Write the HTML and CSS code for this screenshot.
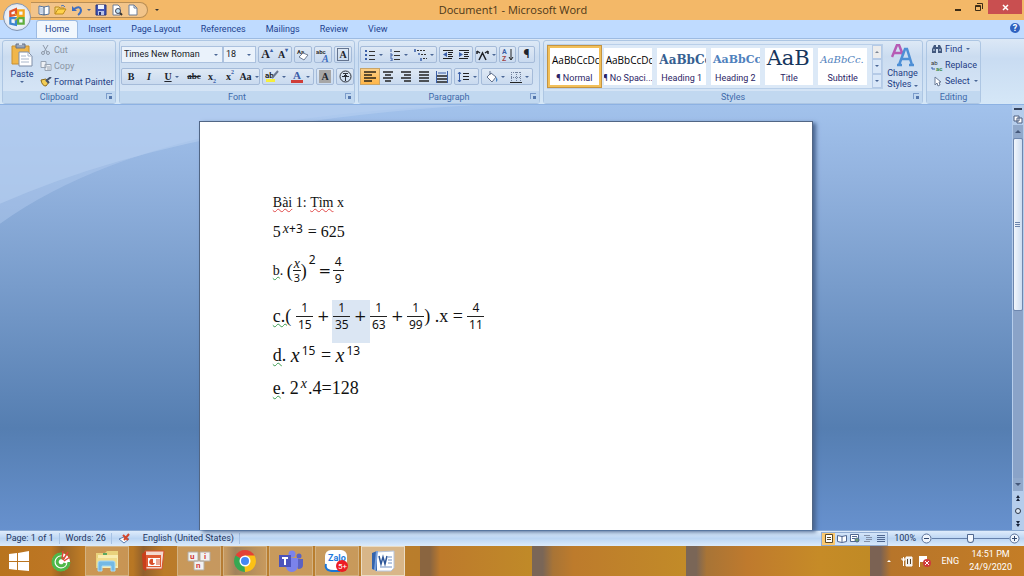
FILE: index.html
```html
<!DOCTYPE html>
<html lang="en">
<head>
  <meta charset="UTF-8" />
  <meta name="viewport" content="width=device-width, initial-scale=1" />
  <title>Document1 - Microsoft Word</title>
  <link rel="stylesheet" href="styles.css">
</head>
<body>

  <header class="titlebar">
    <button class="office" aria-label="Office Button">
      <svg width="20" height="20" viewBox="0 0 18 18" fill="none" stroke-width="2">
        <path d="M3 8V4l5-2v5z" stroke="#e0532c"/>
        <path d="M10 3h5v5h-5z" stroke="#f3a51c"/>
        <path d="M3 10h5v6l-5-1z" stroke="#3d86cf"/>
        <path d="M10 10h5v5h-5z" stroke="#5fae3c"/>
        <path d="M7 6l3 3-3 3" stroke="#e9b52c" stroke-width="1"/>
      </svg>
    </button>
    <div class="quick">
      <button aria-label="Read"><svg width="12" height="12" viewBox="0 0 12 12"><path d="M1 2l5 1 5-1v8l-5 1-5-1z" fill="#fff" stroke="#55749f"/><path d="M6 3v8" stroke="#26476f"/><path d="M2 3l3 1v6l-3-1z" fill="#c7d4e6"/></svg></button>
      <button aria-label="Open"><svg width="13" height="12" viewBox="0 0 13 12"><path d="M1 10V3h4l1 1h4v2" fill="#f7d774" stroke="#b98a1e"/><path d="M1 10l3-5h8l-3 5z" fill="#ffd24a" stroke="#c08d1a"/><path d="M7 2q2-2 4 1" fill="none" stroke="#4a76b8"/></svg></button>
      <button aria-label="Undo"><svg width="12" height="12" viewBox="0 0 12 12"><path d="M3 5q6-4 7 1 0 3-3 5" fill="none" stroke="#3e6fc0" stroke-width="2"/><path d="M1 2v5h5z" fill="#3e6fc0"/></svg></button>
      <span class="caret"></span>
      <button aria-label="Save"><svg width="12" height="12" viewBox="0 0 12 12"><path d="M1 1h10v10H1z" fill="#4154b4" stroke="#27367c"/><path d="M3 1h6v4H3z" fill="#eef2fb"/><path d="M3 7h6v4H3z" fill="#b8c3e6"/><path d="M4 8h2v3H4z" fill="#27367c"/></svg></button>
      <button aria-label="Print Preview"><svg width="12" height="12" viewBox="0 0 12 12"><path d="M2 1h5l2 2v8H2z" fill="#fff" stroke="#6c7c96"/><circle cx="7" cy="7" r="2.5" fill="#bfe0f5" stroke="#445"/><path d="M9 9l2 2" stroke="#333" stroke-width="2"/></svg></button>
      <button aria-label="New"><svg width="12" height="12" viewBox="0 0 12 12"><path d="M2 1h5l3 3v7H2z" fill="#fff" stroke="#6c7c96"/><path d="M7 1v3h3" fill="none" stroke="#6c7c96"/></svg></button>
    </div>
    <button class="customize" aria-label="Customize"><span class="caret"></span></button>
    <h1>Document1 - Microsoft Word</h1>
    <div class="window-buttons">
      <button aria-label="Minimize"><svg width="8" height="10"><path d="M1 8h6" stroke="#3d2d16" stroke-width="2"/></svg></button>
      <button aria-label="Restore"><svg width="9" height="8" fill="none" stroke="#3d2d16"><path d="M1.500 2.500h5v5h-5z"/><path d="M3 .5h5.500V6M1 3.500h5"/></svg></button>
      <button class="close" aria-label="Close"><svg width="7" height="7"><path d="M1 1l5 5M6 1L1 6" stroke="#fff" stroke-width="1.500"/></svg></button>
    </div>
  </header>

  <nav class="tabs">
    <a class="active" href="#">Home</a>
    <a href="#">Insert</a>
    <a href="#">Page Layout</a>
    <a href="#">References</a>
    <a href="#">Mailings</a>
    <a href="#">Review</a>
    <a href="#">View</a>
    <button class="help" aria-label="Help">?</button>
  </nav>

  <div class="ribbon">
    <section class="group">
      <div class="group-body clipboard">
        <button class="big">
          <svg width="22" height="24" viewBox="0 0 22 24"><path d="M1 3h17v18H1z" fill="#f0b64a" stroke="#c98f2e"/><path d="M5 1h9v4H5z" fill="#9aa6ba" stroke="#667288"/><path d="M8 0h3v2H8z" fill="#dfe5ee"/><path d="M8 9h9l4 4v10H8z" fill="#fff" stroke="#7e8ea8"/><path d="M17 9v4h4M10 13h5M10 16h8M10 19h8" fill="none" stroke="#a9b6ca"/></svg>
          Paste<span class="caret"></span>
        </button>
        <div class="stack">
          <button class="off"><svg width="12" height="10" fill="none" stroke="#8e99a8"><path d="M3 0l4 7M8 0L4 7"/><circle cx="3" cy="8" r="1.500"/><circle cx="8" cy="8" r="1.500"/></svg>Cut</button>
          <button class="off"><svg width="12" height="10" fill="#eef1f5" stroke="#98a3b2"><path d="M1 .5h5v6H1zM5 3.500h6v6H5z"/><path d="M7 6h3M7 8h3"/></svg>Copy</button>
          <button><svg width="12" height="10"><path d="M1 3l5-1 3 3-3 4q-4 0-5-6z" fill="#f3cd55" stroke="#8b6a1d"/><path d="M6 4l5-4M6 3l3 3" stroke="#44536e" stroke-width="2"/></svg>Format Painter</button>
        </div>
      </div>
      <h2>Clipboard<i class="launch"></i></h2>
    </section>

    <section class="group">
      <div class="group-body rows">
        <div class="row">
          <div class="combos">
            <label class="combo name"><select aria-label="Font"><option>Times New Roman</option></select><span class="caret"></span></label>
            <label class="combo size"><select aria-label="Font Size"><option>18</option></select><span class="caret"></span></label>
          </div>
          <div class="set"><button class="w17 serif grow">A<sup>▴</sup></button><button class="w17 serif">A<sup>▾</sup></button></div>
          <div class="set"><button class="w17" aria-label="Clear Formatting"><svg width="14" height="13"><text x="1" y="6" font-size="6" fill="#333">Aa</text><path d="M3 9l4-4 5 2-4 5z" fill="#fff" stroke="#6f7d94"/></svg></button></div>
          <div class="set"><button class="w17" aria-label="Phonetic Guide"><svg width="14" height="14"><text x="0" y="6" font-size="6" fill="#333">abc</text><text class="serif" x="6" y="14" font-size="10" font-style="italic" font-weight="bold" fill="#3c6cc0">A</text></svg></button></div>
          <div class="set"><button class="w17" aria-label="Character Border"><span class="boxed serif">A</span></button></div>
        </div>
        <div class="row">
          <div class="set">
            <button class="w18 serif">B</button><button class="w18 serif"><em>I</em></button><button class="w27 serif"><u>U</u><span class="caret"></span></button><button class="w18 serif strike">abc</button><button class="w18 serif">x<sub>2</sub></button><button class="w18 serif">x<sup>2</sup></button><button class="w20 serif">Aa<span class="caret"></span></button>
          </div>
          <div class="set">
            <button class="w25" aria-label="Highlight"><svg width="14" height="13"><path d="M1 9h9v3H1z" fill="#f5ee3c"/><text x="0" y="8" font-size="8" fill="#222">ab</text><path d="M7 8l6-7" stroke="#6a7890" stroke-width="2"/></svg><span class="caret"></span></button><button class="w25" aria-label="Font Color"><svg width="12" height="13"><text class="serif" x="2" y="9" font-size="11" font-weight="bold" fill="#3a5da8">A</text><path d="M0 10h12v3H0z" fill="#cf3d38"/></svg><span class="caret"></span></button>
          </div>
          <div class="set"><button class="w17" aria-label="Character Shading"><span class="shaded serif">A</span></button></div>
          <div class="set"><button class="w17" aria-label="Enclose Characters"><svg width="13" height="13" fill="none" stroke="#2b2f38"><circle cx="6.500" cy="6.500" r="5.500"/><path d="M4 3.500h5M3 6.500h7M6.500 4v7M5 5l1 1M8 5L7 6"/></svg></button></div>
        </div>
      </div>
      <h2>Font<i class="launch"></i></h2>
    </section>

    <section class="group">
      <div class="group-body rows">
        <div class="row">
          <div class="set">
            <button class="w25" aria-label="Bullets"><svg width="12" height="12"><path d="M1 2h2M1 6h2M1 10h2" stroke="#3b5fa8" stroke-width="2"/><path d="M5 2.500h6M5 6.500h6M5 10.500h6" stroke="#333"/></svg><span class="caret"></span></button><button class="w25" aria-label="Numbering"><svg width="12" height="12"><path d="M2 0v3M1 5h2v2H1M1 9h2v3H1" fill="none" stroke="#3b5fa8"/><path d="M5 2.500h6M5 6.500h6M5 10.500h6" stroke="#333"/></svg><span class="caret"></span></button><button class="w25" aria-label="Multilevel List"><svg width="13" height="12"><path d="M1 0v3M4 5h2M7 9v3" stroke="#3b5fa8" stroke-width="1.500"/><path d="M3 1.500h8M7 5.500h5M9 9.500h4" stroke="#333" stroke-dasharray="2 1"/></svg><span class="caret"></span></button>
          </div>
          <div class="set">
            <button class="w17" aria-label="Decrease Indent"><svg width="12" height="12"><path d="M1 1.500h10M6 3.500h5M6 5.500h4M6 7.500h5M1 9.500h9" stroke="#222"/><path d="M5 3v5L1 5.500z" fill="#3b5fa8"/></svg></button><button class="w17" aria-label="Increase Indent"><svg width="12" height="12"><path d="M1 1.500h10M6 3.500h5M6 5.500h4M6 7.500h5M1 9.500h9" stroke="#222"/><path d="M1 3v5l4-2.500z" fill="#3b5fa8"/></svg></button>
          </div>
          <div class="set"><button class="w20" aria-label="Asian Layout"><svg width="13" height="12" fill="none" stroke="#1f2228" stroke-width="1.500"><path d="M3 11l3.500-7L10 11M1 2l3 2M12 2L9 4M1 2v3M12 2v3"/></svg><span class="caret"></span></button></div>
          <div class="set"><button class="w15" aria-label="Sort"><svg width="12" height="13"><text x="0" y="6" font-size="7" fill="#3b5fa8">A</text><text x="0" y="13" font-size="7" fill="#a04545">Z</text><path d="M9 1v10M7 9l2 3 2-3" fill="none" stroke="#222"/></svg></button></div>
          <div class="set"><button class="w15 mark">¶</button></div>
        </div>
        <div class="row">
          <div class="set">
            <button class="w18 on" aria-label="Align Left"><svg width="12" height="11"><path d="M0 1h12M0 4h8M0 7h12M0 10h8" stroke="#2b2417" stroke-width="1.500"/></svg></button><button class="w18" aria-label="Center"><svg width="12" height="11"><path d="M1 1h10M3 4h6M1 7h10M3 10h6" stroke="#222" stroke-width="1.500"/></svg></button><button class="w18" aria-label="Align Right"><svg width="12" height="11"><path d="M1 1h10M4 4h7M1 7h10M4 10h7" stroke="#222" stroke-width="1.500"/></svg></button><button class="w18" aria-label="Justify"><svg width="12" height="11"><path d="M1 1h10M1 4h10M1 7h10M1 10h10" stroke="#222" stroke-width="1.500"/></svg></button><button class="w18" aria-label="Distributed"><svg width="12" height="12"><path d="M.5 0v12M11.500 0v12M2 2h8" stroke="#3b5fa8"/><path d="M1 5h10M1 8h10M1 11h10" stroke="#222" stroke-width="1.500"/></svg></button>
          </div>
          <div class="set"><button class="w23" aria-label="Line Spacing"><svg width="13" height="12"><path d="M2.500 1v10M1 3l1.500-2L4 3M1 9l1.500 2L4 9" fill="none" stroke="#3b5fa8"/><path d="M6 2.500h6M6 5.500h6M6 8.500h6" stroke="#222"/></svg><span class="caret"></span></button></div>
          <div class="set">
            <button class="w25" aria-label="Shading"><svg width="13" height="12"><path d="M2 6l4-4 5 4-4 5z" fill="#fff" stroke="#60708c"/><path d="M5 0v4" stroke="#60708c"/><path d="M11 6q3 3 0 5z" fill="#4a86c8"/></svg><span class="caret"></span></button><button class="w25" aria-label="Borders"><svg width="12" height="12" fill="none" stroke="#70809c"><path d="M1 1.500h10M1.500 1v9M10.500 1v9M6.500 1v9M1 6.500h10" stroke-dasharray="1 1"/><path d="M0 11.500h12" stroke="#222"/></svg><span class="caret"></span></button>
          </div>
        </div>
      </div>
      <h2>Paragraph<i class="launch"></i></h2>
    </section>

    <section class="group">
      <div class="group-body styles">
        <div class="gallery">
          <button class="style on"><span class="sample">AaBbCcDc</span>¶ Normal</button>
          <button class="style"><span class="sample">AaBbCcDc</span>¶ No Spaci...</button>
          <button class="style"><span class="sample h1">AaBbCc</span>Heading 1</button>
          <button class="style"><span class="sample h2">AaBbCc</span>Heading 2</button>
          <button class="style"><span class="sample title">AaB</span>Title</button>
          <button class="style"><span class="sample sub">AaBbCc.</span>Subtitle</button>
          <div class="gallery-scroll">
            <button class="off" aria-label="Row up"><span class="caret up"></span></button>
            <button aria-label="Row down"><span class="caret"></span></button>
            <button aria-label="More"><span class="caret more"></span></button>
          </div>
        </div>
        <button class="big change">
          <svg width="24" height="23" viewBox="0 0 24 23"><path d="M1 13L6 1h2l4 10M3 9h7" fill="none" stroke="#b65bb5" stroke-width="2.500"/><path d="M8 21L14 5h2l5 16M11 15h8M6 21h5M18 21h5" fill="none" stroke="#4d8fd6" stroke-width="2.500"/></svg>
          Change<span>Styles <span class="caret"></span></span>
        </button>
      </div>
      <h2>Styles<i class="launch"></i></h2>
    </section>

    <section class="group">
      <div class="group-body editing stack">
        <button><svg width="12" height="10"><path d="M1 9V5l2-4h2v8zM7 9V1h2l2 4v4z" fill="#42587e"/><path d="M5 4h2" stroke="#42587e" stroke-width="2"/><path d="M2 6h2M8 6h2" stroke="#d6e2f3"/></svg>Find<span class="caret"></span></button>
        <button><svg width="12" height="11"><text x="0" y="5" font-size="6" fill="#333">ab</text><text x="5" y="11" font-size="6" font-weight="bold" fill="#3d8b4a">ac</text><path d="M1 7v2h3" fill="none" stroke="#3b5fa8"/></svg>Replace</button>
        <button><svg width="12" height="11"><path d="M4 1v8l2-2 1 3 2-1-1-3h2z" fill="#fff" stroke="#6c7c96"/></svg>Select<span class="caret"></span></button>
      </div>
      <h2>Editing</h2>
    </section>
  </div>

  <main class="workspace">
    <svg class="swoosh" viewBox="0 0 1012 426" preserveAspectRatio="none">
      <path d="M0 0H470Q150 10 0 119z" fill="#b4cdef" opacity=".45"/>
      <path d="M0 0H470Q180 18 0 99z" fill="#b9d2f2" opacity=".5"/>
    </svg>
    <article class="page">
      <p class="line text14"><span class="red">Bài</span> 1: <span class="red">Tìm</span> x</p>
      <p class="line text16"><span>5</span><sup class="pow"><i>x</i>+3</sup><span> = 625</span></p>
      <p class="line line-b"><span class="green">b</span><span>. </span><span class="paren">(</span><span class="frac tiny"><i>x</i><span>3</span></span><span class="paren">)</span><sup class="pow">2</sup><span class="op">=</span><span class="frac one"><span>4</span><span>9</span></span></p>
      <p class="line line-c"><span class="green">c.(</span><span class="frac first"><span>1</span><span>15</span></span><span class="op">+</span><span class="picked"><span class="frac"><span>1</span><span>35</span></span><span class="op">+</span></span><span class="frac"><span>1</span><span>63</span></span><span class="op">+</span><span class="frac"><span>1</span><span>99</span></span><span>) .x = </span><span class="frac"><span>4</span><span>11</span></span></p>
      <p class="line"><span class="green">d</span><span>. </span><i class="var">x</i><sup class="pow">15</sup><span> = </span><i class="var">x</i><sup class="pow">13</sup></p>
      <p class="line"><span class="green">e</span><span>. 2</span><sup class="pow"><i>x</i></sup><span>.4=128</span></p>
    </article>
    <div class="scrollbar">
      <span class="split"></span>
      <button aria-label="View Ruler"><svg width="10" height="10"><path d="M1 2h5v5H1zM4 4h5v5H4z" fill="#fff" stroke="#4d5f80"/></svg></button>
      <button class="arrow" aria-label="Scroll up"><span class="caret up"></span></button>
      <div class="track"><div class="thumb"></div></div>
      <button class="arrow" aria-label="Scroll down"><span class="caret"></span></button>
      <button aria-label="Previous Page"><svg width="4" height="6"><path d="M2 0l2 3H0zM2 3l2 3H0z" fill="#17233a"/></svg></button>
      <button aria-label="Browse Object"><svg width="8" height="8"><circle cx="4" cy="4" r="2.500" fill="#dce6f3" stroke="#2b3648"/></svg></button>
      <button aria-label="Next Page"><svg width="4" height="6"><path d="M2 3l2-3H0zM2 6l2-3H0z" fill="#17233a"/></svg></button>
    </div>
  </main>

  <footer class="status">
    <span>Page: 1 of 1</span>
    <span>Words: 26</span>
    <span class="proof"><svg width="14" height="12"><path d="M1 6l5-2 5 2-5 4z" fill="#fff" stroke="#5c7db0"/><path d="M5 2l5 5M11 1L6 7" stroke="#d2472e" stroke-width="2"/></svg></span>
    <span>English (United States)</span>
    <div class="views">
      <button class="on" aria-label="Print Layout"><svg width="10" height="9" fill="#fff" stroke="#5b4a26"><path d="M1.500.5h7v8h-7zM3 3.500h4M3 5.500h4"/></svg></button>
      <button aria-label="Full Screen Reading"><svg width="10" height="9" fill="#fff" stroke="#506790"><path d="M.5 1.500L5 2.500l4.500-1v6L5 8.500l-4.500-1zM5 2v6"/></svg></button>
      <button aria-label="Web Layout"><svg width="10" height="9" fill="#fff" stroke="#506790"><path d="M.5.500h8v7h-8zM2 2.500h5M2 4.500h3"/><circle cx="7" cy="6" r="2" fill="#6ca06e"/></svg></button>
      <button aria-label="Outline"><svg width="10" height="9" stroke="#8290a8"><path d="M1 1.500h6M3 3.500h6M3 5.500h6M1 7.500h6"/></svg></button>
      <button aria-label="Draft"><svg width="10" height="9" stroke="#506790"><path d="M1 1.500h8M1 3.500h8M1 5.500h8M1 7.500h8"/></svg></button>
    </div>
    <span class="percent">100%</span>
    <button class="round" aria-label="Zoom out"><svg width="11" height="11"><circle cx="5.500" cy="5.500" r="4.500" fill="#eef4fc" stroke="#5a7199"/><path d="M3 5.500h5" stroke="#33486e"/></svg></button>
    <input type="range" aria-label="Zoom" min="0" max="100" value="50">
    <button class="round" aria-label="Zoom in"><svg width="11" height="11"><circle cx="5.500" cy="5.500" r="4.500" fill="#eef4fc" stroke="#5a7199"/><path d="M3 5.500h5M5.500 3v5" stroke="#33486e"/></svg></button>
  </footer>

  <nav class="taskbar">
    <button class="start" aria-label="Start"><svg width="22" height="20" viewBox="0 0 22 20" fill="#fff"><path d="M1 3l8-1v8H1zM10 2l11-2v10H10zM1 11h8v8l-8-1zM10 11h11v9l-11-1z"/></svg></button>
    <button aria-label="Coc Coc"><svg width="22" height="22"><circle cx="11" cy="12" r="9" fill="#fff"/><path d="M12 4a8 8 0 1 0 7 8" fill="none" stroke="#4fb848" stroke-width="3"/><path d="M14 9a4 4 0 1 0 1 4" fill="none" stroke="#4fb848" stroke-width="3"/><path d="M12 9l1-8M13 10l5-8M14 11l6-4" stroke="#e2463a" stroke-width="1.500"/></svg></button>
    <button class="open" aria-label="File Explorer"><svg width="26" height="22"><path d="M2 3h9l2-2h11v17H2z" fill="#e9d27c"/><path d="M4 5h20v13H4z" fill="#f8ecb0"/><path d="M3 8h20v8H3z" fill="#f1dc8c"/><path d="M4 21v-8q0-2 2-2h13q2 0 2 2v8h-4v-5H8v5z" fill="#74b9e4" stroke="#a9dbf5"/><path d="M9 4h4" stroke="#5aa860" stroke-width="2"/></svg></button>
    <button aria-label="PowerPoint"><svg width="24" height="22"><path d="M4 1h19l-2 18H5z" fill="#f3d9cf" stroke="#d8502c"/><path d="M1 4l4-3v20l-3-2z" fill="#c93f1c"/><path d="M5 5h15v12H5z" fill="#df5a33"/><path d="M7 8h12v8H7z" fill="#fff"/><path d="M12 9a3 3 0 1 0 2 4h-2z" fill="#d8502c"/><path d="M15 10h4M15 12h4M15 14h4" stroke="#d8502c"/></svg></button>
    <button class="open" aria-label="UniKey"><svg width="24" height="20" font-weight="bold" font-size="8"><path d="M1 1h10v9H1zM13 1h10v9H13zM7 10h10v9H7z" fill="#f2f2f2" stroke="#b4aca2"/><g fill="#d23a34"><text x="3" y="8">u</text><text x="17" y="8">i</text><text x="9" y="17">n</text></g></svg></button>
    <button class="open" aria-label="Chrome"><svg width="22" height="22" viewBox="0 0 22 22"><path d="M11 11L1.500 5.500a11 11 0 0 1 19 0z" fill="#e44134"/><path d="M11 11L1.500 5.500A11 11 0 0 0 11 22z" fill="#36a852"/><path d="M11 11h-1l1 11A11 11 0 0 0 20.500 5.500H11z" fill="#fbc116"/><circle cx="11" cy="11" r="5.500" fill="#fff"/><circle cx="11" cy="11" r="4" fill="#4587f4"/></svg></button>
    <button class="open" aria-label="Teams"><svg width="26" height="22"><circle cx="21" cy="6" r="2.500" fill="#5b62c3"/><path d="M17 9h8v6q0 4-5 4z" fill="#5b62c3"/><circle cx="14" cy="4" r="3.500" fill="#7b83eb"/><path d="M8 8h12v8q-1 6-7 6-5-1-5-6z" fill="#7b83eb"/><path d="M1 5h12v12H1z" fill="#4b53bc"/><path d="M4 8h6M7 8v7" stroke="#fff" stroke-width="2"/></svg></button>
    <button class="open" aria-label="Zalo"><svg width="26" height="24"><rect x="1" y="1" width="22" height="20" rx="6" fill="#fff"/><path d="M2 15q-2 7 8 7h6" fill="none" stroke="#1976d8" stroke-width="2"/><text x="4" y="12" font-size="9" font-weight="bold" fill="#1c79dc">Zalo</text><circle cx="18" cy="17" r="6" fill="#ed1c24"/><text x="14" y="20" font-size="8" fill="#fff">5+</text></svg></button>
    <button class="open current" aria-label="Word"><svg width="24" height="22"><path d="M5 2l18-1v17l-3 3H5z" fill="#fff" stroke="#b7c5dc"/><path d="M1 3l5-2v20l-5-2z" fill="#3464ad"/><path d="M6 1L4 20" stroke="#78a0dc" stroke-width="2"/><path d="M8 6l2 8 2-7 2 7 2-8" fill="none" stroke="#2d5699" stroke-width="1.500"/><path d="M17 7h4M17 10h4M17 13h4M9 17h12" stroke="#6e90c5"/></svg></button>
    <div class="tray">
      <button aria-label="Show hidden icons"><span class="caret up"></span></button>
      <svg width="12" height="12"><path d="M5 2h6v9H5z" fill="#eee" stroke="#fff"/><path d="M6.500 4v5M9.500 4v5" stroke="#5a4628"/><path d="M2.500 2v9M1 3v2h3V3" fill="none" stroke="#fff"/></svg>
      <svg width="13" height="12"><path d="M1.500 1v11" stroke="#fff"/><path d="M2 1h7v6H2z" fill="#fff"/><circle cx="9" cy="8" r="4" fill="#cf3b3b"/><path d="M7 6l4 4M11 6l-4 4" stroke="#fff"/></svg>
      <span class="lang">ENG</span>
      <time>14:51 PM<br>24/9/2020</time>
    </div>
  </nav>

</body>
</html>
```
FILE: styles.css
```css
* {
  box-sizing: border-box;
}

body {
  margin: 0;
  height: 100vh;
  display: flex;
  flex-direction: column;
  overflow: hidden;
  font-family: Roboto, "Noto Sans", sans-serif;
  font-size: 9px;
  line-height: 11px;
  color: #1e3c84;
}

h1, h2, p {
  margin: 0;
  font-weight: normal;
}

button {
  display: inline-flex;
  align-items: center;
  justify-content: center;
  padding: 0;
  border: 0;
  background: none;
  color: inherit;
  font: inherit;
  white-space: nowrap;
}

svg {
  flex: none;
}

.serif {
  font-family: "Liberation Serif", serif;
}

.caret {
  display: inline-block;
  flex: none;
  border: 2px solid transparent;
  border-top-color: #4a6796;
  border-bottom: 0;
}

.caret.up {
  border-top: 0;
  border-bottom: 2px solid #7c8594;
}

/* title bar */
.titlebar {
  position: relative;
  display: flex;
  flex: none;
  height: 20px;
  padding-left: 31px;
  background: #f3b868;
}

.office {
  position: absolute;
  z-index: 2;
  left: 3px;
  top: 3px;
  width: 28px;
  height: 28px;
  border-radius: 50%;
  border: 1px solid #8294b0;
  background: radial-gradient(#fff, #e9eef6 60%, #bccadf);
}

.quick {
  display: flex;
  align-items: center;
  gap: 4px;
  height: 16px;
  margin-top: 2px;
  padding: 0 8px 0 7px;
  border: 1px solid #b98e55;
  border-left: 0;
  border-radius: 0 9px 9px 0;
  background: #f2c48a;
}

.customize {
  width: 18px;
}

.customize .caret {
  border-top-color: #333;
  box-shadow: 0 -2px 0 -1px #333;
}

.titlebar h1 {
  flex: 1;
  padding-right: 88px;
  text-align: center;
  font-family: "Open Sans", sans-serif;
  font-size: 11px;
  line-height: 20px;
  color: #4b3718;
}

.window-buttons {
  display: flex;
  align-items: flex-start;
  padding-right: 2px;
}

.window-buttons button {
  width: 20px;
  height: 14px;
}

.window-buttons .close {
  width: 34px;
  background: #c94f50;
}

/* ribbon tabs */
.tabs {
  display: flex;
  flex: none;
  height: 18px;
  padding: 0 4px 0 36px;
  background: #bfdbff;
}

.tabs a {
  padding: 4px 10px 0;
  color: #1e4390;
  text-decoration: none;
}

.tabs .active {
  padding: 3px 8px 0;
  border: 1px solid #9dbbe2;
  border-bottom: 0;
  border-radius: 3px 3px 0 0;
  background: #f1f7fd;
}

.help {
  width: 10px;
  height: 10px;
  margin: 3px 0 0 auto;
  border-radius: 50%;
  background: #2f62c0;
  color: #fff;
  font-weight: bold;
}

/* ribbon */
.ribbon {
  display: grid;
  grid-template-columns: 114px 236px 182px minmax(378px, 1fr) 55px 40px;
  gap: 3px;
  flex: none;
  height: 67px;
  padding: 1px 0 2px 2px;
  background: linear-gradient(#dce8f6, #c9dcf2 30%, #d5e7f7);
  border-top: 1px solid #9dbbe2;
  border-bottom: 1px solid #8db2e3;
}

.group {
  display: flex;
  flex-direction: column;
  min-width: 0;
  border: 1px solid #adc6e3;
  border-radius: 3px;
  background: linear-gradient(#dde9f6, #cbdcf0 25%, #d8e7f7);
}

.group-body {
  display: flex;
  flex: 1;
  min-height: 0;
}

.group h2 {
  position: relative;
  height: 12px;
  font-size: 9px;
  line-height: 12px;
  text-align: center;
  color: #3e6aaa;
  background: #c1d8f0;
}

.launch {
  position: absolute;
  right: 3px;
  top: 2px;
  width: 6px;
  height: 6px;
  border: 1px solid #7b9ccb;
  border-right: 0;
  border-bottom: 0;
  background: linear-gradient(#5577ac, #5577ac) right bottom / 3px 3px no-repeat;
}

.big {
  flex-direction: column;
  justify-content: flex-start;
  gap: 2px;
  line-height: 10px;
}

.clipboard {
  padding: 2px 0 0 8px;
  gap: 7px;
}

.clipboard .big {
  width: 22px;
}

.stack {
  display: flex;
  flex-direction: column;
  align-items: flex-start;
}

.stack button {
  gap: 2px;
  height: 16px;
}

.clipboard .stack {
  margin-top: -1px;
}

.stack .off {
  color: #8b95a4;
}

.stack .caret {
  margin-left: 2px;
}

.rows {
  flex-direction: column;
  gap: 5px;
  padding: 5px 0 0 1px;
}

.row {
  display: flex;
  gap: 2px;
}

.combos,
.set {
  display: flex;
  height: 17px;
}

.set {
  border: 1px solid #a5bbd9;
  border-radius: 2px;
  background: linear-gradient(#dfe9f5, #c9daef);
  color: #20242c;
}

.set button {
  gap: 3px;
  font-size: 10px;
  font-weight: bold;
}

.set .grow {
  font-size: 12px;
}

.set sup,
.set sub {
  font-size: 6px;
  line-height: 6px;
  color: #3b5fa8;
  align-self: flex-start;
  margin-left: -3px;
}

.set sub {
  align-self: flex-end;
}

.set .strike {
  font-size: 9px;
  text-decoration: line-through;
}

.w15 { width: 15px; }
.w17 { width: 16px; }
.w18 { width: 18px; }
.w20 { width: 20px; }
.w23 { width: 23px; }
.w25 { width: 25px; }
.w27 { width: 27px; }

.set .mark {
  font-size: 12px;
}

.set .on {
  background: linear-gradient(#fbcf86, #ffb648);
  box-shadow: 0 0 0 1px #c8a468;
}

.boxed,
.shaded {
  width: 12px;
  line-height: 11px;
  border: 1px solid #64748f;
}

.shaded {
  border-color: #a6a6a6;
  background: #a6a6a6;
}

.combo {
  display: flex;
  align-items: center;
  padding-right: 4px;
  border: 1px solid #abc1de;
  background: #eaf2fb;
}

.combo select {
  flex: 1;
  min-width: 0;
  padding: 0 0 0 2px;
  border: 0;
  appearance: none;
  background: none;
  font: inherit;
  color: #16181c;
}

.combo.name { width: 102px; }
.combo.size { width: 33px; }

/* styles gallery */
.styles {
  gap: 2px;
  padding: 3px 2px 2px 3px;
}

.gallery {
  display: flex;
  flex: 1;
  gap: 5px;
  padding: 3px 0 3px 2px;
  border: 1px solid #b9cfe9;
  background: #dce9f7;
  min-width: 0;
}

.style {
  flex: 1;
  flex-direction: column;
  justify-content: flex-end;
  min-width: 0;
  overflow: hidden;
  padding-bottom: 1px;
  background: #fff;
  color: #2b2465;
}

.style.on {
  overflow: visible;
  box-shadow: 0 0 0 2px #f2c05a, 0 0 0 3px #c59440;
}

.sample {
  flex: 1;
  align-self: stretch;
  overflow: hidden;
  padding-left: 2px;
  text-align: left;
  font-family: "Open Sans", sans-serif;
  font-size: 10px;
  line-height: 24px;
  color: #000;
}

.sample.h1, .sample.h2, .sample.title, .sample.sub {
  font-family: "DejaVu Serif", serif;
  font-size: 12px;
  font-weight: bold;
  color: #365f91;
}

.sample.h2 {
  font-size: 11px;
  color: #4f81bd;
}

.sample.title {
  font-size: 21px;
  font-weight: normal;
  line-height: 20px;
  color: #17365d;
}

.sample.sub {
  font-size: 10px;
  font-weight: normal;
  font-style: italic;
  color: #4f81bd;
}

.gallery-scroll {
  display: flex;
  flex-direction: column;
  width: 10px;
  margin: -3px 0;
}

.gallery-scroll button {
  flex: 1;
  border: 1px solid #b5cae6;
  background: #d9e7f8;
}

.gallery-scroll .off {
  background: #ececec;
}

.caret.more {
  box-shadow: 0 -3px 0 -1px #4a6796;
}

.change {
  width: 35px;
  gap: 1px;
}

.editing {
  padding: 0 0 0 4px;
}

/* document area */
.workspace {
  position: relative;
  display: flex;
  flex: 1;
  min-height: 0;
  background: linear-gradient(#a2c2ec, #93b3df 17%, #557eb1 76%, #6791ce);
}

.swoosh {
  position: absolute;
  width: 100%;
  height: 100%;
}

.page {
  position: relative;
  display: flex;
  flex-direction: column;
  gap: 11px;
  width: 60%;
  margin: 16px auto 0;
  padding: 72px 73px 0;
  border: 1px solid #516685;
  border-bottom: 0;
  background: #fff;
  box-shadow: 3px 2px 4px #4a6690;
  font-family: "Liberation Serif", serif;
  font-size: 18px;
  line-height: 22px;
  color: #111;
}

.line {
  display: flex;
  align-items: center;
  height: 22px;
  white-space: pre;
}

.text14 {
  height: 17px;
  font-size: 14px;
}

.text16 {
  height: 20px;
  font-size: 16px;
}

.line-b {
  height: 35px;
  font-size: 14px;
}

.line-c {
  height: 34px;
}

.red,
.green {
  text-decoration: underline wavy 1px #e04848;
  text-underline-offset: 1px;
}

.green {
  text-decoration-color: #3b9b50;
}

.pow {
  align-self: flex-start;
  padding: 0 1px 0 2px;
  font-family: "Noto Sans", sans-serif;
  font-size: 12px;
  line-height: 14px;
}

.pow i,
.tiny i {
  font-family: "Liberation Serif", serif;
  font-size: 14px;
}

.frac {
  display: inline-flex;
  flex-direction: column;
  width: 16px;
  text-align: center;
  font-family: "Noto Sans", sans-serif;
  font-size: 12px;
  line-height: 16px;
}

.frac :last-child {
  border-top: 1px solid #222;
}

.frac.first {
  margin-left: 5px;
}

.frac.one {
  width: 11px;
}

.frac.tiny {
  width: 8px;
  font-size: 11px;
  line-height: 13px;
}

.paren {
  font-size: 18px;
}

.op {
  width: 20px;
  text-align: center;
  font-family: "DejaVu Serif", serif;
  font-size: 15px;
}

.line-b .op {
  width: 16px;
}

.line-c .frac {
  width: 17px;
}

.picked {
  display: flex;
  align-items: center;
  margin: 0 0 -10px -1px;
  padding: 0 0 10px 1px;
  background: #dbe6f3;
}

.var {
  font-size: 20px;
}

/* scroll bar */
.scrollbar {
  position: relative;
  display: flex;
  flex-direction: column;
  align-items: center;
  width: 12px;
  background: #b5cdec;
}

.scrollbar button {
  height: 13px;
}

.split {
  width: 8px;
  height: 2px;
  margin: 3px 0 2px;
  background: #35435c;
}

.scrollbar .arrow {
  width: 10px;
  background: #91a9cb;
}

.scrollbar .arrow .caret {
  border-width: 3px;
  border-top-width: 0;
  border-bottom-color: #45587a;
}

.scrollbar .arrow .caret:not(.up) {
  border-width: 3px 3px 0;
  border-top-color: #45587a;
}

.track {
  flex: 1;
  width: 10px;
  background: #8aa3c8;
}

.thumb {
  height: 51%;
  border: 1px solid #6e87ae;
  border-radius: 2px;
  background:
    repeating-linear-gradient(#6c85ad 0 1px, transparent 1px 2px) center / 5px 6px no-repeat,
    linear-gradient(90deg, #f1f6fc, #cddcf0);
}

/* status bar */
.status {
  display: flex;
  align-items: center;
  flex: none;
  height: 16px;
  padding: 0 4px 0 0;
  border-top: 1px solid #8aa9d2;
  background: linear-gradient(#dfecfb, #bbd5f3 50%, #dcebfb);
  color: #1d3561;
}

.status > span {
  padding: 0 5px 0 6px;
  border-right: 1px solid #a7c2e4;
}

.status .proof {
  display: flex;
  border: 0;
}

.views {
  display: flex;
  margin-left: auto;
  border: 1px solid #93add2;
}

.views button {
  width: 13px;
  height: 12px;
}

.views .on {
  background: #fcc96e;
}

.status .percent {
  border: 0;
}

.status input {
  width: 77px;
  height: 12px;
  margin: 0;
  appearance: none;
  background: linear-gradient(#6681ac, #6681ac) center / 100% 1px no-repeat;
}

.status input::-webkit-slider-thumb {
  appearance: none;
  width: 7px;
  height: 9px;
  border: 1px solid #50688f;
  border-radius: 1px 1px 4px 4px;
  background: #f4f8fd;
}

/* task bar */
.taskbar {
  display: flex;
  flex: none;
  gap: 2px;
  height: 30px;
  background: linear-gradient(90deg, #b8741e, #bd7624 5%, #986426 6%, #bd7b26 8%, #b87724 13%, #905f2c 14%, #bb7b28 16%, #b57c34 22%, #87602f 23%, #b97e30 26%, #b97d2b 41%, #8a6540 41% 42%, #bd7a2c 43%, #c08a28 52%, #7a6657 52% 53%, #a87436 54%, #bd7b2c 56%, #c28b28 67%, #7a6657 67% 68%, #a87436 69%, #bf7a2d 73%, #c68b27 80%, #c08a25 85%, #7b6253 85% 86%, #b7752a 87%, #c47d26);
  color: #fff;
}

.taskbar > button {
  width: 44px;
  border: 1px solid transparent;
}

.taskbar > .start {
  width: 37px;
}

.taskbar .open {
  border-color: #d3b282;
  background: #ffffff38;
}

.taskbar .current {
  border-color: #eadcc4;
  background: #ffffff70;
}

.tray {
  display: flex;
  align-items: center;
  gap: 5px;
  margin-left: auto;
  padding-right: 12px;
}

.tray .caret {
  border-bottom-color: #fff;
  margin-right: 5px;
}

.lang {
  padding: 0 5px;
}

.tray time {
  text-align: center;
  line-height: 13px;
}
```
